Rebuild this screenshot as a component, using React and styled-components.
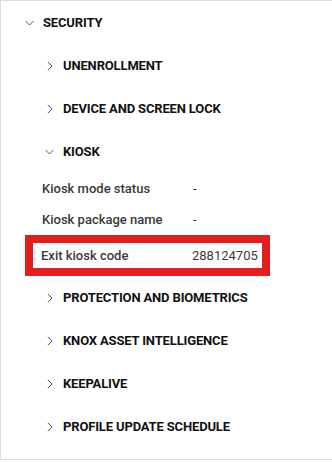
import React from "react";
import styled, { createGlobalStyle } from "styled-components";

const GlobalStyle = createGlobalStyle`
    html, body {
        margin: 0;
        padding: 0;
        background: #ffffff;
    }
    body {
        font-family: Roboto, "Noto Sans", sans-serif;
        -webkit-font-smoothing: antialiased;
    }
`;

const Panel = styled.div`
    width: 332px;
    height: 460px;
    box-sizing: border-box;
    border-top: 1px solid #dcdcdc;
    border-left: 1px solid #dcdcdc;
    border-bottom: 1px solid #dcdcdc;
    background: #ffffff;
    display: flex;
    flex-direction: column;
`;

const HeaderRow = styled.div`
    height: 43px;
    display: flex;
    align-items: center;
    padding-left: ${props => props.indent}px;
    gap: ${props => props.gap}px;
    flex-shrink: 0;
`;

const HeaderText = styled.span`
    font-size: 13px;
    font-weight: 700;
    color: #111111;
    letter-spacing: -0.15px;
`;

const Nested = styled.div`
    display: flex;
    flex-direction: column;
`;

const DetailRow = styled.div`
    height: 31px;
    display: flex;
    align-items: center;
    padding-left: 41px;
    flex-shrink: 0;
`;

const Label = styled.span`
    width: 151px;
    font-size: 13px;
    font-weight: 500;
    color: #3a3a3a;
`;

const Value = styled.span`
    font-size: 13px;
    font-weight: 400;
    color: #3a3a3a;
`;

const Highlight = styled.div`
    margin-left: 24px;
    width: 245px;
    height: 41px;
    box-sizing: border-box;
    border: 8px solid #e41e1e;
    display: flex;
    align-items: center;
    padding-left: 8px;
    flex-shrink: 0;
`;

const ChevronDown = () => (
    <svg width="9" height="6" viewBox="0 0 9 6">
        <path d="M0.5 1 L4.5 5 L8.5 1" fill="none" stroke="#555" strokeWidth="1" />
    </svg>
);

const ChevronRight = () => (
    <svg width="6" height="10" viewBox="0 0 6 10">
        <path d="M0.8 0.8 L5 5 L0.8 9.2" fill="none" stroke="#555" strokeWidth="1" />
    </svg>
);

const Section = ({ title, open }) => (
    <HeaderRow indent={open ? 44 : 46} gap={open ? 9 : 10}>
        {open ? <ChevronDown /> : <ChevronRight />}
        <HeaderText>{title}</HeaderText>
    </HeaderRow>
);

export default function App() {
    return (
        <>
            <GlobalStyle />
            <Panel>
                <HeaderRow indent={24} gap={9}>
                    <ChevronDown />
                    <HeaderText>SECURITY</HeaderText>
                </HeaderRow>
                <Nested>
                    <Section title="UNENROLLMENT" />
                    <Section title="DEVICE AND SCREEN LOCK" />
                    <Section title="KIOSK" open />
                    <DetailRow>
                        <Label>Kiosk mode status</Label>
                        <Value>-</Value>
                    </DetailRow>
                    <DetailRow>
                        <Label>Kiosk package name</Label>
                        <Value>-</Value>
                    </DetailRow>
                    <Highlight>
                        <Label>Exit kiosk code</Label>
                        <Value>288124705</Value>
                    </Highlight>
                    <Section title="PROTECTION AND BIOMETRICS" />
                    <Section title="KNOX ASSET INTELLIGENCE" />
                    <Section title="KEEPALIVE" />
                    <Section title="PROFILE UPDATE SCHEDULE" />
                </Nested>
            </Panel>
        </>
    );
}
